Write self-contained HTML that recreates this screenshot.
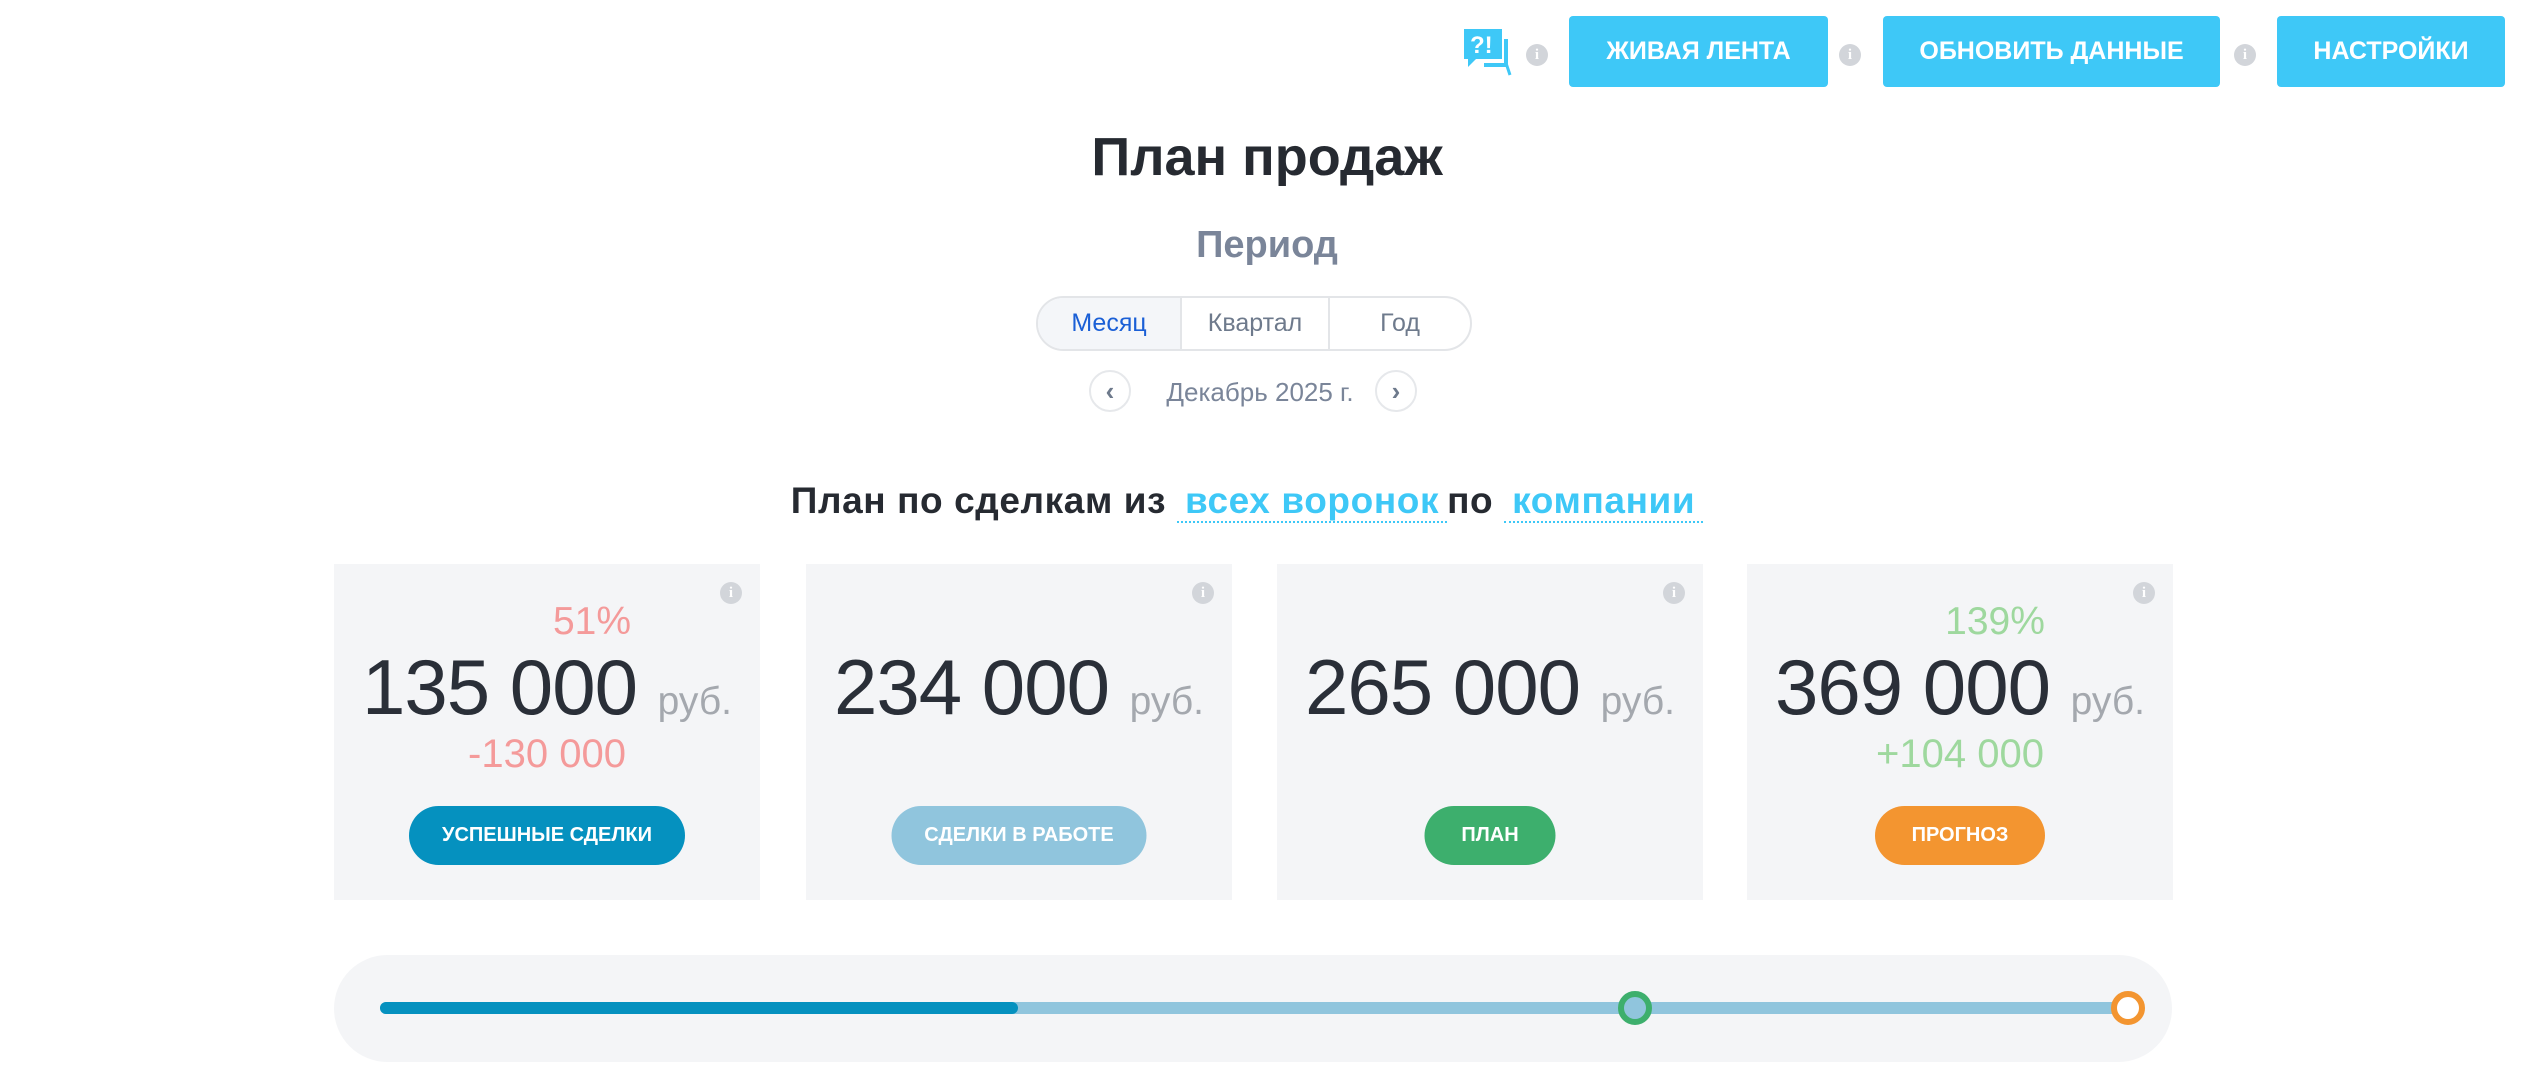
<!DOCTYPE html>
<html><head><meta charset="utf-8"><style>
*{margin:0;padding:0;box-sizing:border-box}
body{width:2534px;height:1074px;background:#fff;font-family:"Liberation Sans","DejaVu Sans",sans-serif;position:relative;overflow:hidden}
.a{position:absolute}
.btn{position:absolute;top:16px;height:71px;background:#3ec8f7;border-radius:4px;color:#fff;font-weight:bold;font-size:25px;display:flex;align-items:center;justify-content:center}
.inf{position:absolute;width:22px;height:22px;border-radius:50%;background:#d2d5da;color:#fff;font-size:15px;font-weight:bold;text-align:center;line-height:22px;font-family:"Liberation Serif",serif}
.ctr{position:absolute;left:0;width:2534px;text-align:center}
.card{position:absolute;top:564px;width:426px;height:336px;background:#f4f5f7}
.card .inf{top:18px;right:18px}
.pct{position:absolute;top:36px;left:0;width:100%;text-align:center;font-size:39px;padding-left:90px}
.num{position:absolute;top:78px;left:0;width:100%;text-align:center;font-size:78px;color:#2a2f38;letter-spacing:-1px}
.num span{font-size:39px;color:#a4a8ae;letter-spacing:0}
.diff{position:absolute;top:168px;left:0;width:100%;text-align:center;font-size:40px;padding-left:0}
.pill{position:absolute;top:242px;height:59px;left:50%;transform:translateX(-50%);border-radius:30px;color:#fff;font-weight:bold;font-size:20px;display:flex;align-items:center;justify-content:center}
</style></head><body>
<svg class="a" style="left:1462px;top:27px" width="52" height="50" viewBox="0 0 52 50"><path d="M2 2h38v30H14l-8 8v-8H2z" fill="#3ec8f7"/><path d="M44 12v26H22" stroke="#3ec8f7" stroke-width="4" fill="none"/><path d="M44 36l4 12" stroke="#3ec8f7" stroke-width="3"/><text x="8" y="26" font-size="24" font-weight="bold" fill="#fff" font-family="Liberation Sans">?!</text></svg>
<div class="inf" style="left:1526px;top:44px">i</div>
<div class="btn" style="left:1569px;width:259px">ЖИВАЯ ЛЕНТА</div>
<div class="inf" style="left:1839px;top:44px">i</div>
<div class="btn" style="left:1883px;width:337px">ОБНОВИТЬ ДАННЫЕ</div>
<div class="inf" style="left:2234px;top:44px">i</div>
<div class="btn" style="left:2277px;width:228px">НАСТРОЙКИ</div>

<div class="ctr" style="top:126px;font-size:54px;font-weight:bold;color:#262a31">План продаж</div>
<div class="ctr" style="top:224px;font-size:38px;font-weight:bold;color:#7a8599">Период</div>
<div class="a" style="left:1036px;top:296px;width:436px;height:55px;border:2px solid #e3e5e8;border-radius:28px;overflow:hidden;display:flex;font-size:25px;color:#6e7a8c">
<div style="width:144px;background:#f4f6f9;color:#1a5fd6;display:flex;align-items:center;justify-content:center;border-right:2px solid #e3e5e8">Месяц</div>
<div style="width:148px;display:flex;align-items:center;justify-content:center;border-right:2px solid #e3e5e8">Квартал</div>
<div style="flex:1;display:flex;align-items:center;justify-content:center">Год</div></div>
<div class="a" style="left:1089px;top:370px;width:42px;height:42px;border:2px solid #e6e8eb;border-radius:50%;color:#6e7a8c;font-size:26px;font-weight:bold;text-align:center;line-height:38px">‹</div>
<div class="ctr" style="top:377px;font-size:26px;color:#7a8599;padding-right:14px">Декабрь 2025 г.</div>
<div class="a" style="left:1375px;top:370px;width:42px;height:42px;border:2px solid #e6e8eb;border-radius:50%;color:#6e7a8c;font-size:26px;font-weight:bold;text-align:center;line-height:38px">›</div>

<div class="ctr" style="top:480px;font-size:37px;font-weight:bold;color:#262a31;letter-spacing:0.6px;padding-right:40px">План по сделкам из <span style="color:#3ec8f7;border-bottom:2px dotted #3ec8f7;padding:0 8px">всех воронок</span>по <span style="color:#3ec8f7;border-bottom:2px dotted #3ec8f7;padding:0 8px">компании</span></div>

<div class="card" style="left:334px"><div class="inf">i</div>
<div class="pct" style="color:#f49a9a">51%</div>
<div class="num">135 000 <span>руб.</span></div>
<div class="diff" style="color:#f49a9a">-130 000</div>
<div class="pill" style="width:276px;background:#0591bf">УСПЕШНЫЕ СДЕЛКИ</div></div>
<div class="card" style="left:806px"><div class="inf">i</div>
<div class="num">234 000 <span>руб.</span></div>
<div class="pill" style="width:255px;background:#90c5dd">СДЕЛКИ В РАБОТЕ</div></div>
<div class="card" style="left:1277px"><div class="inf">i</div>
<div class="num">265 000 <span>руб.</span></div>
<div class="pill" style="width:131px;background:#3daf6d">ПЛАН</div></div>
<div class="card" style="left:1747px"><div class="inf">i</div>
<div class="pct" style="color:#9ed89e;padding-left:70px">139%</div>
<div class="num">369 000 <span>руб.</span></div>
<div class="diff" style="color:#9ed89e">+104 000</div>
<div class="pill" style="width:170px;background:#f39530">ПРОГНОЗ</div></div>

<div class="a" style="left:334px;top:955px;width:1838px;height:107px;background:#f4f5f7;border-radius:54px"></div>
<div class="a" style="left:380px;top:1002px;width:1764px;height:12px;background:#90c5dd;border-radius:6px"></div>
<div class="a" style="left:380px;top:1002px;width:638px;height:12px;background:#0591bf;border-radius:6px"></div>
<div class="a" style="left:1618px;top:991px;width:34px;height:34px;border:6px solid #3daf6d;border-radius:50%;background:#90c5dd"></div>
<div class="a" style="left:2111px;top:991px;width:34px;height:34px;border:6px solid #f39530;border-radius:50%;background:#fff"></div>
</body></html>
